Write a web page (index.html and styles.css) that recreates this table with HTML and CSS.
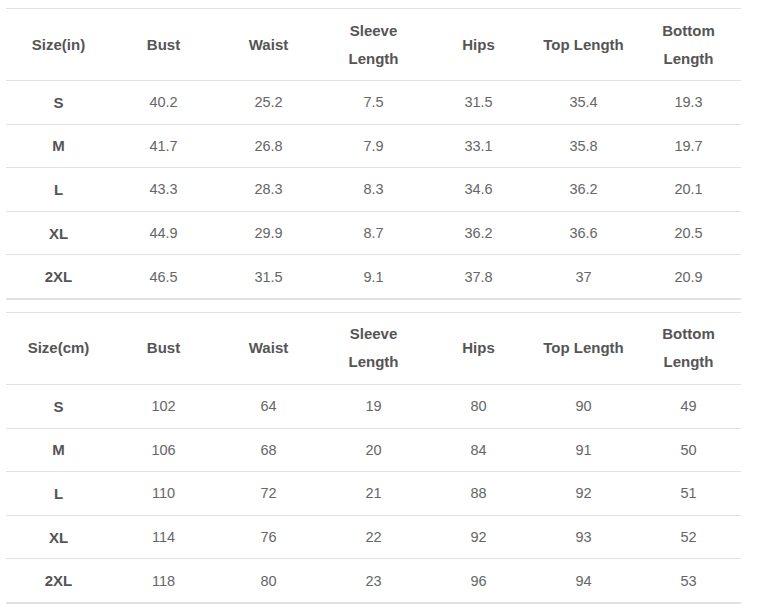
FILE: index.html
```html
<!DOCTYPE html>
<html>
<head>
<meta charset="utf-8">
<link rel="stylesheet" href="styles.css">
</head>
<body>
<div class="page">
<table class="size-table">
  <thead>
    <tr><th>Size(in)</th><th>Bust</th><th>Waist</th><th>Sleeve<br>Length</th><th>Hips</th><th>Top Length</th><th>Bottom<br>Length</th></tr>
  </thead>
  <tbody>
    <tr><td class="sz">S</td><td>40.2</td><td>25.2</td><td>7.5</td><td>31.5</td><td>35.4</td><td>19.3</td></tr>
    <tr><td class="sz">M</td><td>41.7</td><td>26.8</td><td>7.9</td><td>33.1</td><td>35.8</td><td>19.7</td></tr>
    <tr><td class="sz">L</td><td>43.3</td><td>28.3</td><td>8.3</td><td>34.6</td><td>36.2</td><td>20.1</td></tr>
    <tr><td class="sz">XL</td><td>44.9</td><td>29.9</td><td>8.7</td><td>36.2</td><td>36.6</td><td>20.5</td></tr>
    <tr><td class="sz">2XL</td><td>46.5</td><td>31.5</td><td>9.1</td><td>37.8</td><td>37</td><td>20.9</td></tr>
  </tbody>
</table>
<table class="size-table">
  <thead>
    <tr><th>Size(cm)</th><th>Bust</th><th>Waist</th><th>Sleeve<br>Length</th><th>Hips</th><th>Top Length</th><th>Bottom<br>Length</th></tr>
  </thead>
  <tbody>
    <tr><td class="sz">S</td><td>102</td><td>64</td><td>19</td><td>80</td><td>90</td><td>49</td></tr>
    <tr><td class="sz">M</td><td>106</td><td>68</td><td>20</td><td>84</td><td>91</td><td>50</td></tr>
    <tr><td class="sz">L</td><td>110</td><td>72</td><td>21</td><td>88</td><td>92</td><td>51</td></tr>
    <tr><td class="sz">XL</td><td>114</td><td>76</td><td>22</td><td>92</td><td>93</td><td>52</td></tr>
    <tr><td class="sz">2XL</td><td>118</td><td>80</td><td>23</td><td>96</td><td>94</td><td>53</td></tr>
  </tbody>
</table>
</div>
</body>
</html>
```
FILE: styles.css
```css
html, body {
  margin: 0;
  padding: 0;
  background: #fff;
}
.page {
  padding: 8px 0 0 6px;
  display: flex;
  flex-direction: column;
  gap: 12px;
  font-family: "Liberation Sans", Arial, sans-serif;
}
.size-table {
  width: 735px;
  border-collapse: collapse;
  table-layout: fixed;
  border-top: 1px solid #e2e2e2;
  border-bottom: 2px solid #e2e2e2;
}
.size-table th {
  height: 71px;
  padding: 0;
  font-size: 15px;
  line-height: 28px;
  font-weight: bold;
  color: #555;
  text-align: center;
  vertical-align: middle;
  border-bottom: 1px solid #e2e2e2;
}
.size-table td {
  height: 42.6px;
  padding: 0;
  font-size: 14.5px;
  color: #666;
  text-align: center;
  vertical-align: middle;
  border-bottom: 1px solid #e2e2e2;
}
.size-table td.sz {
  font-weight: bold;
  font-size: 15px;
  color: #555;
}
```
